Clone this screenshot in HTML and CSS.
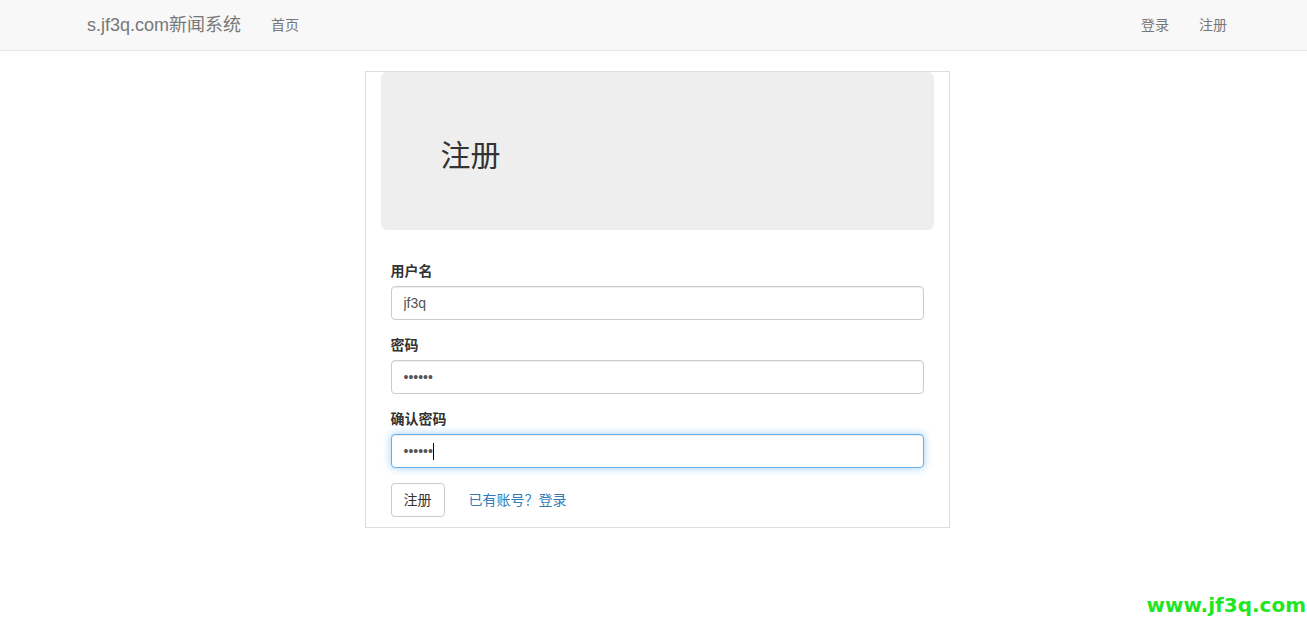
FILE: index.html
```html
<!DOCTYPE html>
<html lang="zh-CN">
<head>
<meta charset="utf-8">
<title>注册 - s.jf3q.com新闻系统</title>
<link rel="stylesheet" href="styles.css">
</head>
<body>
<nav class="navbar">
  <div class="container nav-inner">
    <a class="brand" href="#">s.jf3q.com新闻系统</a>
    <ul class="nav">
      <li><a href="#">首页</a></li>
    </ul>
    <ul class="nav nav-right">
      <li><a href="#">登录</a></li>
      <li><a href="#">注册</a></li>
    </ul>
  </div>
</nav>
<main class="page">
  <div class="panel">
    <div class="jumbotron">
      <h2 class="jumbo-title">注册</h2>
    </div>
    <form class="form">
      <div class="form-group">
        <label class="label" for="username">用户名</label>
        <input class="input" id="username" type="text" value="jf3q">
      </div>
      <div class="form-group">
        <label class="label" for="password">密码</label>
        <input class="input" id="password" type="password" value="123456">
      </div>
      <div class="form-group">
        <label class="label" for="repassword">确认密码</label>
        <div class="field">
          <input class="input input-focus" id="repassword" type="password" value="123456">
          <span class="caret"></span>
        </div>
      </div>
      <div class="actions">
        <button class="btn" type="button">注册</button>
        <a class="link" href="#">已有账号？登录</a>
      </div>
    </form>
  </div>
</main>
<div class="watermark">www.jf3q.com</div>
</body>
</html>
```
FILE: styles.css
```css
* { box-sizing: border-box; }
html, body { margin: 0; padding: 0; }
body {
  font-family: "Liberation Sans", "Noto Sans CJK SC", sans-serif;
  font-size: 14px;
  line-height: 20px;
  color: #333;
  background: #fff;
  min-height: 624px;
  position: relative;
}
a { text-decoration: none; }

.navbar {
  background: #f8f8f8;
  border-bottom: 1px solid #e7e7e7;
  height: 51px;
  padding-left: 7px;
}
.container { width: 1170px; margin: 0 auto; }
.nav-inner { display: flex; align-items: stretch; height: 50px; }
.brand {
  display: block;
  padding: 15px;
  font-size: 18px;
  line-height: 20px;
  color: #777;
}
.nav { list-style: none; margin: 0; padding: 0; display: flex; }
.nav-right { margin-left: auto; }
.nav a {
  display: block;
  padding: 15px;
  line-height: 20px;
  color: #777;
}

.page {
  display: flex;
  justify-content: center;
  padding-left: 7px;
  padding-top: 20px;
}
.panel {
  width: 585px;
  border: 1px solid #ddd;
  padding: 0 15px;
}
.jumbotron {
  background: #eee;
  border-radius: 6px;
  padding: 44px 60px;
  margin-bottom: 31px;
}
.jumbo-title {
  margin: 20px 0 10px;
  font-size: 30px;
  line-height: 40px;
  font-weight: 400;
  color: #333;
}

.form { padding: 0 10px 10px; }
.form-group { margin-bottom: 15px; }
.label {
  display: block;
  font-weight: 700;
  margin-bottom: 5px;
}
.field { position: relative; }
.input {
  display: block;
  width: 100%;
  height: 34px;
  padding: 6px 12px;
  font-family: "Liberation Sans", "Noto Sans CJK SC", sans-serif;
  font-size: 14px;
  line-height: 20px;
  color: #555;
  background: #fff;
  border: 1px solid #ccc;
  border-radius: 4px;
  box-shadow: inset 0 1px 1px rgba(0,0,0,.075);
  outline: none;
}
.input-focus {
  border-color: #66afe9;
  box-shadow: inset 0 1px 1px rgba(0,0,0,.075), 0 0 8px rgba(102,175,233,.6);
}
.caret {
  position: absolute;
  left: 42px;
  top: 9px;
  width: 1px;
  height: 17px;
  background: #000;
}
.actions { display: flex; align-items: center; gap: 24px; }
.btn {
  height: 34px;
  padding: 6px 12px;
  font-family: "Liberation Sans", "Noto Sans CJK SC", sans-serif;
  font-size: 14px;
  line-height: 20px;
  color: #333;
  background: #fff;
  border: 1px solid #ccc;
  border-radius: 4px;
}
.link { color: #337ab7; }

.watermark {
  position: absolute;
  right: 1px;
  top: 592px;
  font-family: "DejaVu Sans", sans-serif;
  font-weight: 700;
  font-size: 20px;
  line-height: 26px;
  color: #1fe61f;
}
```
